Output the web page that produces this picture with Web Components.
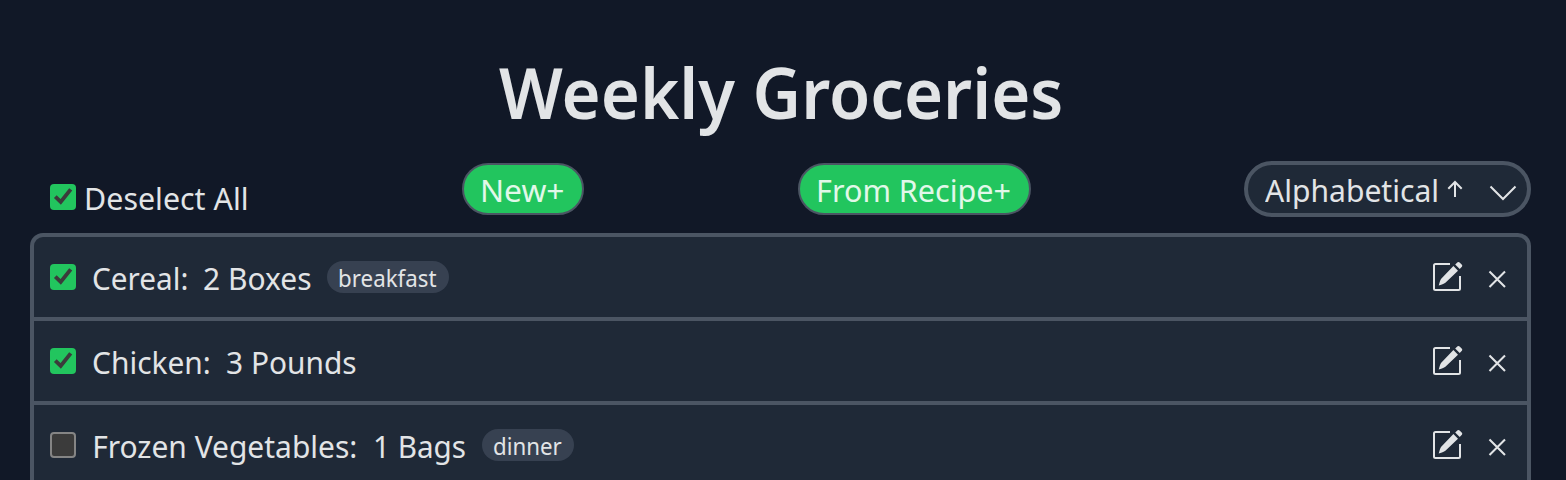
<!DOCTYPE html>
<html lang="en"><head><meta charset="utf-8"><title>Weekly Groceries</title>
<style>
html,body{margin:0;height:480px;overflow:hidden;background:#111827}
body{font-family:"Noto Sans",sans-serif;color:#e2e4e6}
</style></head><body>
<grocery-page></grocery-page>
<script>
const define = (name, html, setup) => customElements.define(name, class extends HTMLElement {
  connectedCallback() {
    if (this.shadowRoot) return;
    const t = document.createElement('template');
    t.innerHTML = html;
    this.attachShadow({mode: 'open'}).append(t.content.cloneNode(true));
    if (setup) setup(this, this.shadowRoot);
  }
});

/* One line of text condensed to an ink width given in pixels. */
define('fit-text', `<style>
:host{display:block;flex:none;white-space:pre;line-height:48px}
span{display:block;width:max-content;transform-origin:0 0}
</style><span><slot></slot></span>`, (el, root) => {
  const size = el.getAttribute('size') || 31.5, weight = el.getAttribute('weight') || 400;
  const c = document.createElement('canvas').getContext('2d');
  c.font = `${weight} ${size}px "Noto Sans"`;
  const m = c.measureText(el.textContent), w = +el.getAttribute('w');
  const s = w / (m.actualBoundingBoxRight + m.actualBoundingBoxLeft);
  el.style.width = w + 'px';
  const span = root.querySelector('span');
  span.style.font = `${weight} ${size}px/${el.getAttribute('line') || 48}px "Noto Sans",sans-serif`;
  span.style.transform = `matrix(${s},0,0,1,${m.actualBoundingBoxLeft * s},0)`;
});

define('check-box', `<style>
:host{display:block;flex:none;box-sizing:border-box;width:26px;height:26px;border:2px solid #858585;border-radius:4px;background:#3b3b3b}
:host([checked]){border:0;background:#22c55e}
svg{display:none}:host([checked]) svg{display:block}
</style><svg width="26" height="26" viewBox="0 0 26 26"><path d="M5.3 12.7 10.7 17.9 20.7 5.4" fill="none" stroke="#3b3b3b" stroke-width="3.9"/></svg>`);

define('pill-button', `<style>
:host{display:flex;box-sizing:border-box;height:52px;padding-top:1px;justify-content:center;border:2px solid #4b5563;border-radius:26px;background:#22c55e;color:#e1f8e9}
</style><slot></slot>`);

define('sort-select', `<style>
:host{display:flex;box-sizing:border-box;width:287px;height:56px;padding:1px 0 0 16.5px;border:4px solid #4b5563;border-radius:28px;background:#1f2937}
svg{display:block;flex:none;margin-left:.5px}
</style><fit-text w="172">Alphabetical</fit-text>
<svg width="90" height="48" viewBox="1437 166 90 48" fill="none" stroke="#e2e4e6" stroke-width="2"><path d="M1455 197V182M1448.3 188.7 1455 182 1461.7 188.7M1490.5 186.5 1503 199 1515.5 186.5"/></svg>`);

define('tag-badge', `<style>
:host{display:flex;justify-content:center;height:32px;border-radius:16px;background:#374151}
::slotted(fit-text){margin-left:1px}
</style><slot></slot>`);

define('row-actions', `<style>
:host{display:flex;margin-left:auto;gap:26px}
svg{display:block}
</style>
<svg width="32" height="80" viewBox="1432 237 32 80"><path d="M1450 264H1435.5Q1434 264 1434 265.5V288.5Q1434 290 1435.5 290H1458.5Q1460 290 1460 288.5V276" fill="none" stroke="#e2e4e6" stroke-width="2"/><path d="M1453.4 266.1 1458 270.7 1445.4 282.8Q1444.2 283.8 1438.7 285.6 1439.8 280.6 1441 279ZM1455.2 264.5 1457.6 262.3Q1458.6 261.5 1459.6 262.4L1461.9 264.7Q1462.7 265.7 1461.9 266.7L1459.7 268.9Z" fill="#e2e4e6"/></svg>
<svg width="37" height="80" viewBox="1490 237 37 80" overflow="visible"><path d="M1489.5 271.5 1505 287M1505 271.5 1489.5 287" stroke="#e2e4e6" stroke-width="2.1"/></svg>`);

define('grocery-item', `<style>
:host{display:flex;height:80px;padding-left:16px;border-bottom:4px solid #4b5563;align-items:flex-start}
check-box{margin:27px 16.5px 0 0}
.label{display:flex;padding-top:17px}
::slotted(tag-badge){margin-top:24px}
</style><check-box></check-box><div class="label"><slot name="label"></slot></div><slot></slot><row-actions></row-actions>`,
(el, root) => root.querySelector('check-box').toggleAttribute('checked', el.hasAttribute('checked')));

define('grocery-list', `<style>
:host{display:block;box-sizing:border-box;border:4px solid #4b5563;border-bottom:0;border-radius:13px 13px 0 0;background:#1f2937;height:247px;overflow:hidden}
</style><slot></slot>`);

define('grocery-page', `<style>
:host{display:block;box-sizing:border-box;height:480px;padding:43px 35px 0 30px;overflow:hidden}
h1{display:flex;margin:0;height:118px;padding-left:468.5px}
.bar{display:flex;height:72px;align-items:flex-start}
.all{display:flex;padding-left:20px;width:412px;box-sizing:border-box;margin-right:20px}
.all check-box{margin:23px 11.2px 0 0}
.all fit-text{margin-top:13px}
pill-button{margin-top:2px}
.new{width:122px;margin-right:214px}.recipe{width:233px;margin-right:213px}
.qty{margin-left:17.5px}
</style>
<h1><fit-text size="70" weight="600" line="98" w="562">Weekly Groceries</fit-text></h1>
<div class="bar"><div class="all"><check-box checked></check-box><fit-text w="159.5">Deselect All</fit-text></div>
<pill-button class="new"><fit-text w="80.5">New+</fit-text></pill-button>
<pill-button class="recipe"><fit-text w="191">From Recipe+</fit-text></pill-button>
<sort-select></sort-select></div>
<grocery-list>
<grocery-item checked><fit-text slot="label" w="94">Cereal:</fit-text><fit-text slot="label" class="qty" w="106.5">2 Boxes</fit-text><tag-badge style="width:122px;margin-left:16px"><fit-text size="23.5" line="34" w="96">breakfast</fit-text></tag-badge></grocery-item>
<grocery-item checked><fit-text slot="label" w="116.5">Chicken:</fit-text><fit-text slot="label" style="margin-left:18px" w="128.5">3 Pounds</fit-text></grocery-item>
<grocery-item><fit-text slot="label" style="margin-left:2px" w="261">Frozen Vegetables:</fit-text><fit-text slot="label" style="margin-left:19.5px" w="90">1 Bags</fit-text><tag-badge style="width:92px;margin-left:16.5px"><fit-text size="23.5" line="34" w="68">dinner</fit-text></tag-badge></grocery-item>
</grocery-list>`);
</script></body></html>
